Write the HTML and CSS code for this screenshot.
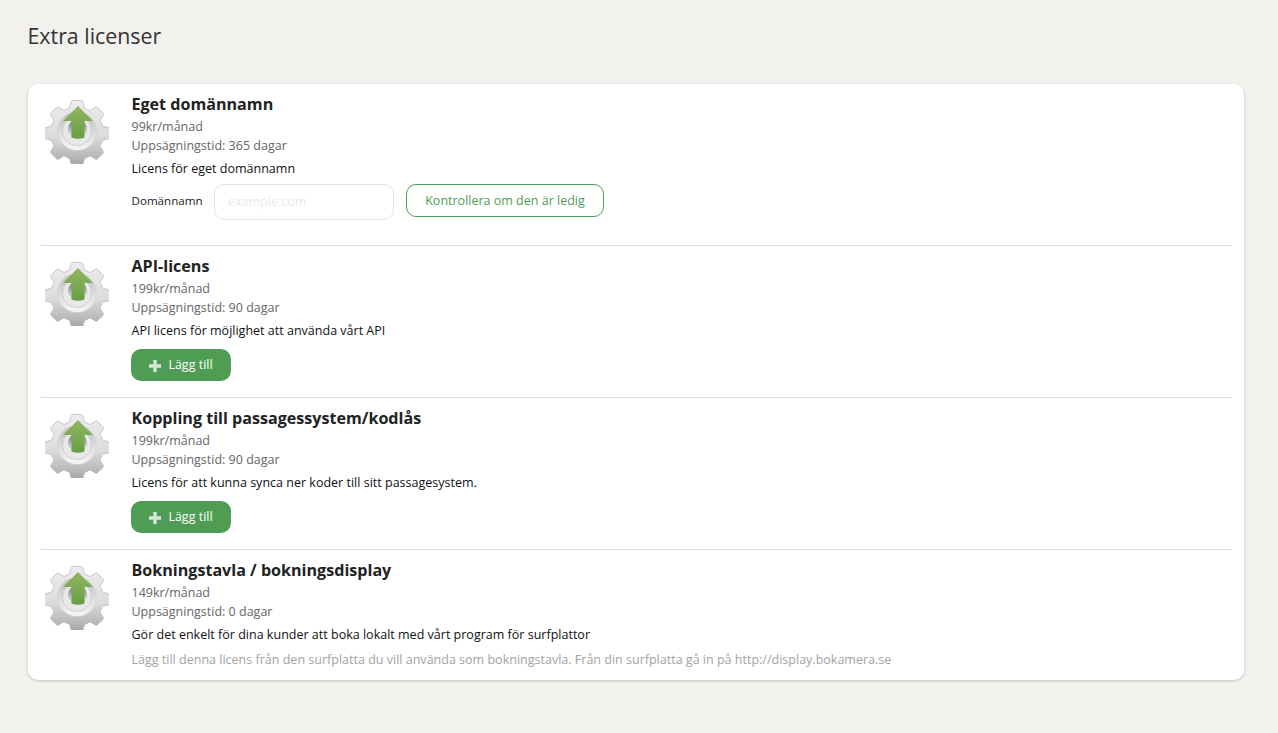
FILE: index.html
```html
<!DOCTYPE html>
<html lang="sv">
<head>
<meta charset="utf-8">
<title>Extra licenser</title>
<link rel="stylesheet" href="styles.css">
</head>
<body>
<svg class="defs" width="0" height="0" aria-hidden="true">
  <defs>
    <linearGradient id="gearFill" x1="0" y1="0" x2="0" y2="1">
      <stop offset="0" stop-color="#ececec"/>
      <stop offset="0.55" stop-color="#dcdcdc"/>
      <stop offset="1" stop-color="#a6a6a6"/>
    </linearGradient>
    <linearGradient id="ringFill" x1="0" y1="0" x2="0" y2="1">
      <stop offset="0" stop-color="#bdbdbd"/>
      <stop offset="1" stop-color="#f6f6f6"/>
    </linearGradient>
    <linearGradient id="holeFill" x1="0" y1="0" x2="0" y2="1">
      <stop offset="0" stop-color="#6f6f6f"/>
      <stop offset="0.7" stop-color="#cfcfcf"/>
      <stop offset="1" stop-color="#f0f0f0"/>
    </linearGradient>
    <linearGradient id="arrowFill" x1="0" y1="0" x2="0" y2="1">
      <stop offset="0" stop-color="#93b562"/>
      <stop offset="1" stop-color="#659f42"/>
    </linearGradient>
    <symbol id="gear" viewBox="0 0 64 66">
      <path fill="url(#gearFill)" stroke="#bcbcbc" stroke-width="0.8" stroke-linejoin="round" d="M27.500 2.500 h9 q1 0 1.300 1 l1.700 6.500 q3 1 5.500 2.500 l5.800-3.400 q.8-.4 1.500.3 l5.800 5.800 q.7.700.3 1.500 l-3.400 5.800 q1.500 2.500 2.500 5.500 l6 1.700 q1 .3 1 1.300 v8.400 q0 1-1 1.300 l-6 1.700 q-1 3-2.500 5.500 l3.400 5.800 q.4.800-.3 1.500 l-5.800 5.800 q-.7.700-1.500.3 l-5.800-3.400 q-2.500 1.500-5.500 2.500 l-1.700 6.500 q-.3 1-1.300 1 h-9 q-1 0-1.300-1 l-1.700-6.500 q-3-1-5.500-2.500 l-5.800 3.400 q-.8.400-1.500-.3 l-5.800-5.800 q-.7-.7-.3-1.500 l3.400-5.800 q-1.500-2.500-2.500-5.500 l-6-1.700 q-1-.3-1-1.300 v-8.400 q0-1 1-1.300 l6-1.700 q1-3 2.500-5.500 l-3.400-5.800 q-.4-.8.3-1.500 l5.800-5.800 q.7-.7 1.500-.3 l5.800 3.400 q2.500-1.500 5.500-2.500 l1.700-6.500 q.3-1 1.300-1 z"/>
      <circle cx="32" cy="33" r="19.500" fill="url(#ringFill)" stroke="#d2d2d2" stroke-width="0.5"/>
      <circle cx="32" cy="33" r="14.500" fill="#e8e8e8" stroke="#c0c0c0" stroke-width="0.6"/>
      <circle cx="32.500" cy="31" r="9.500" fill="url(#holeFill)"/>
      <path fill="url(#arrowFill)" d="M33 8 L48 23 H39.500 V39.500 Q33 42 26.500 39.500 V23 H18 Z"/>
    </symbol>
  </defs>
</svg>
<main class="page">
  <h1 class="page-title">Extra licenser</h1>
  <section class="card">
    <article class="item item-form">
      <svg class="item-icon" aria-hidden="true"><use href="#gear"/></svg>
      <div class="item-body">
        <h2 class="item-title">Eget domännamn</h2>
        <p class="item-meta">99kr/månad</p>
        <p class="item-meta">Uppsägningstid: 365 dagar</p>
        <p class="item-desc">Licens för eget domännamn</p>
        <form class="domain-form">
          <label class="domain-label" for="domain">Domännamn</label>
          <input class="domain-input" id="domain" type="text" placeholder="example.com">
          <button class="btn-outline" type="button">Kontrollera om den är ledig</button>
        </form>
      </div>
    </article>
    <article class="item">
      <svg class="item-icon" aria-hidden="true"><use href="#gear"/></svg>
      <div class="item-body">
        <h2 class="item-title">API-licens</h2>
        <p class="item-meta">199kr/månad</p>
        <p class="item-meta">Uppsägningstid: 90 dagar</p>
        <p class="item-desc">API licens för möjlighet att använda vårt API</p>
        <button class="btn-add" type="button"><svg class="plus" viewBox="0 0 12 12" aria-hidden="true"><path d="M4.300 0h3.400v4.300H12v3.400H7.700V12H4.300V7.700H0V4.300h4.300z"/></svg>Lägg till</button>
      </div>
    </article>
    <article class="item">
      <svg class="item-icon" aria-hidden="true"><use href="#gear"/></svg>
      <div class="item-body">
        <h2 class="item-title">Koppling till passagessystem/kodlås</h2>
        <p class="item-meta">199kr/månad</p>
        <p class="item-meta">Uppsägningstid: 90 dagar</p>
        <p class="item-desc">Licens för att kunna synca ner koder till sitt passagesystem.</p>
        <button class="btn-add" type="button"><svg class="plus" viewBox="0 0 12 12" aria-hidden="true"><path d="M4.300 0h3.400v4.300H12v3.400H7.700V12H4.300V7.700H0V4.300h4.300z"/></svg>Lägg till</button>
      </div>
    </article>
    <article class="item">
      <svg class="item-icon" aria-hidden="true"><use href="#gear"/></svg>
      <div class="item-body">
        <h2 class="item-title">Bokningstavla / bokningsdisplay</h2>
        <p class="item-meta">149kr/månad</p>
        <p class="item-meta">Uppsägningstid: 0 dagar</p>
        <p class="item-desc">Gör det enkelt för dina kunder att boka lokalt med vårt program för surfplattor</p>
        <p class="item-note">Lägg till denna licens från den surfplatta du vill använda som bokningstavla. Från din surfplatta gå in på http://display.bokamera.se</p>
      </div>
    </article>
  </section>
</main>
</body>
</html>
```
FILE: styles.css
```css
* { box-sizing: border-box; }
html, body { margin: 0; height: 100%; }
body {
  background: #f2f1ed;
  font-family: "Open Sans", "Liberation Sans", sans-serif;
  font-size: 12.5px;
  color: #111;
  overflow: hidden;
}
.defs { position: absolute; }
.page { padding: 21px 34px 0 27.5px; }
.page-title {
  margin: 0 0 33px;
  font-size: 21.35px;
  line-height: 30px;
  font-weight: 400;
  color: #333;
}
.card {
  margin-left: .5px;
  background: #fff;
  border-radius: 10px;
  padding: 0 12px 0 13px;
  box-shadow: 0 1px 3px rgba(0, 0, 0, .2);
  height: 596px;
}
.item {
  display: flex;
  padding: 9px 0 16px;
  border-bottom: 1px solid #dcdcdc;
}
.item-form { padding-bottom: 25px; }
.item:last-child { border-bottom: 0; }
.item-icon {
  width: 64px;
  height: 66px;
  margin: 5px 22.5px 0 4px;
  flex: none;
}
.item-body { flex: 1; min-width: 0; }
.item-title {
  margin: 0 0 2px;
  font-size: 16.1px;
  line-height: 22px;
  font-weight: 700;
  color: #222;
}
.item-meta {
  margin: 0;
  font-size: 12.5px;
  line-height: 19px;
  color: #666;
}
.item-desc {
  margin: 4px 0 0;
  font-size: 12.53px;
  line-height: 19px;
  color: #111;
}
.item-note {
  margin: 6px 0 0;
  font-size: 12.53px;
  line-height: 19px;
  color: #a3a3a3;
}
.domain-form {
  display: flex;
  align-items: flex-start;
  margin-top: 6px;
}
.domain-label {
  font-size: 11.6px;
  line-height: 33px;
  width: 82.5px;
  flex: none;
  color: #222;
}
.domain-input {
  width: 180px;
  height: 36px;
  margin-right: 12px;
  padding: 0 13px 2px;
  border: 1px solid #e4e4e4;
  border-radius: 10px;
  background: #fff;
  font: 12.5px "Open Sans", "Liberation Sans", sans-serif;
}
.domain-input::placeholder { color: #eaeaea; opacity: 1; }
.btn-outline {
  height: 33px;
  width: 198px;
  padding: 0;
  border: 1px solid #4f9d55;
  border-radius: 10px;
  background: #fff;
  color: #4f9d55;
  font: 12.5px "Open Sans", "Liberation Sans", sans-serif;
}
.btn-add {
  display: flex;
  align-items: center;
  justify-content: center;
  width: 100px;
  height: 32px;
  margin: 9px 0 0 -.5px;
  padding: 0 0 1px;
  border: 0;
  border-radius: 10px;
  background: #4f9d55;
  color: #fff;
  font: 12.5px "Open Sans", "Liberation Sans", sans-serif;
}
.plus {
  width: 12px;
  height: 12px;
  margin: 3px 7px 0 0;
  fill: #d8e8d9;
}
```
